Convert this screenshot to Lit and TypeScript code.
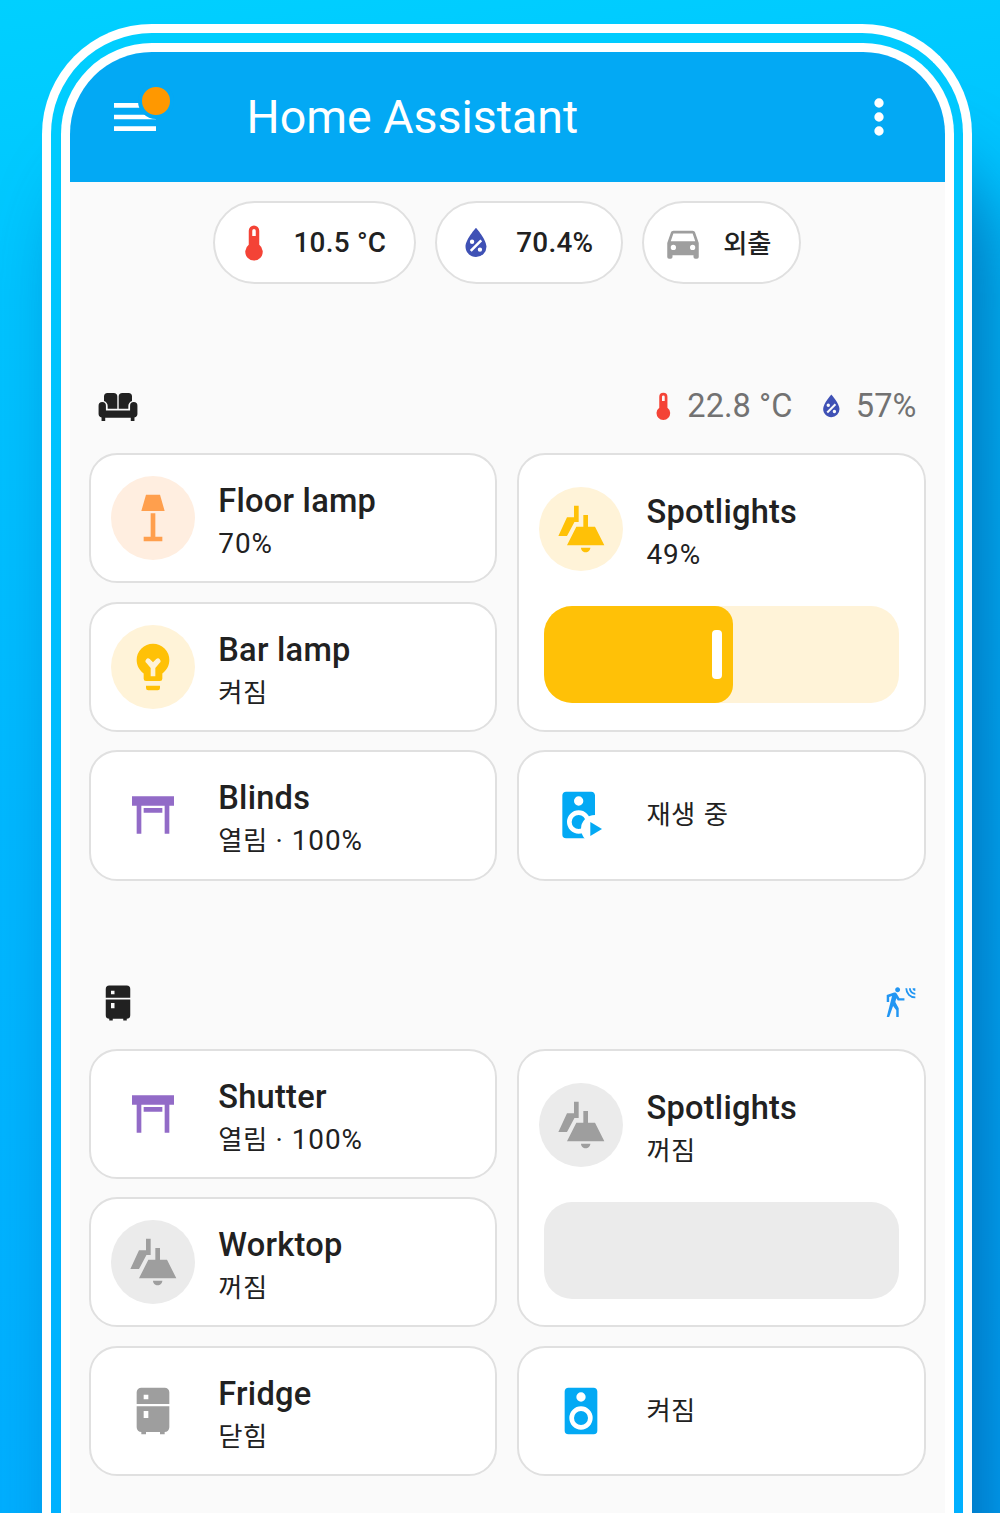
import { LitElement, html, svg, css, nothing } from "lit";
import { customElement, property } from "lit/decorators.js";
import { styleMap } from "lit/directives/style-map.js";

const ICONS: Record<string, string> = {
  thermometer:
    "M15 13V5A3 3 0 0 0 9 5V13A5 5 0 1 0 15 13M12 4A1 1 0 0 1 13 5V8H11V5A1 1 0 0 1 12 4Z",
  water:
    "M12,3.25C12,3.25 6,10 6,14C6,17.32 8.69,20 12,20A6,6 0 0,0 18,14C18,10 12,3.25 12,3.25M14.47,9.97L15.53,11.03L9.53,17.03L8.47,15.97M9.75,10A1.25,1.25 0 0,1 11,11.25A1.25,1.25 0 0,1 9.75,12.5A1.25,1.25 0 0,1 8.5,11.25A1.25,1.25 0 0,1 9.75,10M14.25,14.5A1.25,1.25 0 0,1 15.5,15.75A1.25,1.25 0 0,1 14.25,17A1.25,1.25 0 0,1 13,15.75A1.25,1.25 0 0,1 14.25,14.5Z",
  car: "M5,11L6.5,6.5H17.5L19,11M17.5,16A1.5,1.5 0 0,1 16,14.5A1.5,1.5 0 0,1 17.5,13A1.5,1.5 0 0,1 19,14.5A1.5,1.5 0 0,1 17.5,16M6.5,16A1.5,1.5 0 0,1 5,14.5A1.5,1.5 0 0,1 6.5,13A1.5,1.5 0 0,1 8,14.5A1.5,1.5 0 0,1 6.5,16M18.92,6C18.72,5.42 18.16,5 17.5,5H6.5C5.84,5 5.28,5.42 5.08,6L3,12V20A1,1 0 0,0 4,21H5A1,1 0 0,0 6,20V19H18V20A1,1 0 0,0 19,21H20A1,1 0 0,0 21,20V12L18.92,6Z",
  sofa: "M6 4H9.5Q11.6 4 11.6 6V13H6.1V11.4Q6 9.2 4 8.5V6Q4 4 6 4ZM18 4H14.5Q12.4 4 12.4 6V13H17.9V11.4Q18 9.2 20 8.5V6Q20 4 18 4ZM3 9.2A2.1 2.1 0 0 1 5.1 11.3V14H18.9V11.3A2.1 2.1 0 0 1 23.1 11.3V16A2.1 2.1 0 0 1 21.4 18V20H19.3V18.1H4.7V20H2.6V18A2.1 2.1 0 0 1 .9 16V11.3A2.1 2.1 0 0 1 3 9.2Z",
  floorLamp: "M9 2H15L17 9H7L9 2M11 10H13V20H16V22H8V20H11V10Z",
  bulb: "M12,2A7,7 0 0,0 5,9C5,11.38 6.19,13.47 8,14.74V17A1,1 0 0,0 9,18H15A1,1 0 0,0 16,17V14.74C17.81,13.47 19,11.38 19,9A7,7 0 0,0 12,2M9,20V21A1,1 0 0,0 10,22H14A1,1 0 0,0 15,21V20H9M11 16V12.4L9.2 10.3A.95 .95 0 0 1 10.6 8.6L12 10L13.4 8.6A.95 .95 0 0 1 14.8 10.3L13 12.4V16Z",
  shade: "M3 4H21V8H19V20H17V8H7V20H5V8H3V4M8 9H16V11H8V9Z",
  ceiling:
    "M9 2H11V9H9.2L6 15H2.3L6 7H9V2M13 6H15V11H18L22 19H6L10 11H13V6M12 20H16C16 21.1 15.1 22 14 22S12 21.1 12 20Z",
  speaker:
    "M12,12A3,3 0 1,0 12,18A3,3 0 1,0 12,12M12,20A5,5 0 1,1 12,10A5,5 0 1,1 12,20M12,4A2,2 0 1,1 12,8A2,2 0 1,1 12,4M17.4,2H6.6C5.7,2 5,2.7 5,3.6V20.4A1.6,1.6 0 0,0 6.6,22H17.4A1.6,1.6 0 0,0 19,20.4V3.6C19,2.7 18.3,2 17.4,2Z",
  fridge:
    "M7,2H17A2,2 0 0,1 19,4V9H5V4A2,2 0 0,1 7,2M19,19A2,2 0 0,1 17,21V22H15V21H9V22H7V21A2,2 0 0,1 5,19V10H19V19M8,5V7H10V5H8M8,12V15H10V12H8Z",
  motion:
    "M10,0.2C9,0.2 8.2,1 8.2,2C8.2,3 9,3.8 10,3.8C11,3.8 11.8,3 11.8,2C11.8,1 11,0.2 10,0.2M15.67,1A7.33,7.33 0 0,0 23,8.33V7A6,6 0 0,1 17,1H15.67M18.33,1C18.33,3.58 20.42,5.67 23,5.67V4.33C21.16,4.33 19.67,2.84 19.67,1H18.33M21,1A2,2 0 0,0 23,3V1H21M7.92,4.03C7.75,4.03 7.58,4.06 7.42,4.11L2,5.8V11H3.8V7.33L5.91,6.67L2,22H3.8L6.67,13.89L9,17V22H10.8V15.59L8.31,11.05L9.04,8.18L10.12,10H15V8.2H11.38L9.38,4.87C9.08,4.37 8.54,4.03 7.92,4.03Z",
  menu: "M3 6H21V8H3V6M3 11H21V13H3V11M3 16H21V18H3V16Z",
  dots: "M12 4A2 2 0 1 1 12 8A2 2 0 1 1 12 4M12 10A2 2 0 1 1 12 14A2 2 0 1 1 12 10M12 16A2 2 0 1 1 12 20A2 2 0 1 1 12 16Z",
};

/** Hangul runs are set slightly smaller than the Latin text around them. */
const mixed = (text: string) =>
  text
    .split(/([\uac00-\ud7a3]+)/)
    .filter(Boolean)
    .map((run) => (/[\uac00-\ud7a3]/.test(run) ? html`<span class="ko" lang="ko">${run}</span>` : run));

@customElement("ha-icon")
class HaIcon extends LitElement {
  @property() name = "";
  static styles = css`
    :host { display: block; flex: none; width: 56px; height: 56px; }
    .glyph { display: block; width: 100%; height: 100%; fill: currentColor; fill-rule: evenodd; }
    .gap { fill: #fff; }
  `;
  render() {
    const body =
      this.name === "speakerPlay"
        ? svg`<path transform="translate(-1 0)" d=${ICONS.speaker}></path>
            <circle class="gap" cx="18" cy="18" r="6"></circle>
            <path d="M16 15V21L21 18Z"></path>`
        : svg`<path d=${ICONS[this.name]}></path>`;
    return html`<svg class="glyph" viewBox="0 0 24 24">${body}</svg>`;
  }
}

interface Tile {
  icon: string;
  tone: string;
  name?: string;
  state: string;
  disc?: boolean;
  level?: number;
}

@customElement("tile-card")
class TileCard extends LitElement {
  @property({ attribute: false }) tile!: Tile;
  static styles = css`
    :host {
      display: flex; flex-direction: column; box-sizing: border-box;
      background: #fff; border: 2.3px solid #e0e0e0; border-radius: 28px;
      padding: 0 20.6px;
    }
    :host([tall]) { grid-row: span 2; padding-top: 26.5px; }
    .head { display: flex; align-items: center; gap: 23.2px; flex: 1; }
    :host([tall]) .head { flex: none; height: 95px; }
    .disc {
      flex: none; display: flex; align-items: center; justify-content: center;
      width: 84px; height: 84px; border-radius: 50%;
    }
    .filled { background: var(--soft); }
    .disc, .slider { color: var(--tone); }
    .amber { --tone: #ffc107; --soft: #fff3d8; }
    .orange { --tone: #ff9f4d; --soft: #ffeee0; }
    .purple { --tone: #926bc7; }
    .blue { --tone: #03a9f4; }
    .grey { --tone: #9e9e9e; --soft: #ebebeb; }
    .text { display: flex; flex-direction: column; color: #212121; white-space: nowrap; }
    .name { font-size: 32.6px; line-height: 43px; font-weight: 500; letter-spacing: 0.25px; margin-top: 9px; }
    .state { font-size: 27.9px; line-height: 42px; letter-spacing: 0.97px; }
    .ko { font-size: 0.945em; letter-spacing: 0.4px; }
    .slider {
      display: flex; margin: 29.5px 4.3px 0; height: 97.7px; border-radius: 28px;
      background: var(--soft); overflow: hidden;
    }
    .fill {
      display: flex; align-items: center; justify-content: flex-end; box-sizing: border-box;
      padding-right: 11.3px; background: var(--tone); border-radius: 0 18px 18px 0;
    }
    .grip { width: 10px; height: 49px; border-radius: 4px; background: #fff; }
  `;
  render() {
    const t = this.tile;
    return html`
      <div class="head ${t.tone}">
        <div class="disc ${t.disc ? "filled" : ""}"><ha-icon name=${t.icon}></ha-icon></div>
        <div class="text">
          ${t.name ? html`<div class="name">${t.name}</div>` : nothing}
          <div class="state">${mixed(t.state)}</div>
        </div>
      </div>
      ${t.level === undefined
        ? nothing
        : html`<div class="slider ${t.tone}">
            ${t.level > 0
              ? html`<div class="fill" style=${styleMap({ width: `${t.level}%` })}><div class="grip"></div></div>`
              : nothing}
          </div>`}
    `;
  }
}

const LIVING: Tile[] = [
  { icon: "floorLamp", tone: "orange", name: "Floor lamp", state: "70%", disc: true },
  { icon: "ceiling", tone: "amber", name: "Spotlights", state: "49%", disc: true, level: 53.4 },
  { icon: "bulb", tone: "amber", name: "Bar lamp", state: "켜짐", disc: true },
  { icon: "shade", tone: "purple", name: "Blinds", state: "열림 · 100%" },
  { icon: "speakerPlay", tone: "blue", state: "재생 중" },
];

const KITCHEN: Tile[] = [
  { icon: "shade", tone: "purple", name: "Shutter", state: "열림 · 100%" },
  { icon: "ceiling", tone: "grey", name: "Spotlights", state: "꺼짐", disc: true, level: 0 },
  { icon: "ceiling", tone: "grey", name: "Worktop", state: "꺼짐", disc: true },
  { icon: "fridge", tone: "grey", name: "Fridge", state: "닫힘" },
  { icon: "speaker", tone: "blue", state: "켜짐" },
];

@customElement("app-root")
class AppRoot extends LitElement {
  static styles = css`
    :host {
      display: block; box-sizing: border-box; width: 1000px; height: 1513px; overflow: hidden;
      padding: 24px 28px 0 42px;
      background: linear-gradient(172deg, #00d0ff 0, #00c4ff 18%, #00b8ff 50%, #00adff 100%);
      font-family: Roboto, "Noto Sans CJK KR", sans-serif;
    }
    .shell {
      box-sizing: border-box; height: 1700px; padding: 9.5px;
      border: 9.3px solid #fff; border-bottom: 0; border-radius: 110px 110px 0 0;
      background: linear-gradient(172deg, #00cfff 0, #00c4ff 18%, #00b8ff 50%, #00adff 100%);
      box-shadow: 28px 130px 72px -2px rgba(0, 80, 155, 0.64);
    }
    .screen {
      box-sizing: border-box; height: 1690px; overflow: hidden;
      border: 9.3px solid #fff; border-bottom: 0; border-radius: 91px 91px 0 0;
      background: #fafafa;
    }
    .bar {
      display: flex; align-items: center; box-sizing: border-box; height: 130.5px;
      padding: 0 38px 0 37px; background: #03a9f4; color: #fff;
    }
    .menu { position: relative; }
    .alert {
      position: absolute; top: -6px; left: 31px; width: 28px; height: 28px;
      border: 4px solid #03a9f4; border-radius: 50%; background: #ff9800;
    }
    .title { flex: 1; margin-left: 84px; font-size: 46.5px; line-height: 56px; }
    .badges { display: flex; justify-content: center; gap: 19px; padding-top: 19.2px; }
    .badge {
      display: flex; align-items: center; gap: 18.9px; box-sizing: border-box; height: 83.3px;
      padding: 0 28px 0 18px; border: 2.3px solid #e0e0e0; border-radius: 42px; background: #fff;
      color: #212121; font-size: 27.9px; font-weight: 500; letter-spacing: 0.25px; white-space: nowrap;
    }
    .ko { font-size: 0.94em; letter-spacing: 0; margin-top: -2px; display: inline-block; }
    .badge ha-icon, .room ha-icon { width: 42px; height: 42px; }
    .red { color: #f44336; }
    .indigo { color: #3f51b5; }
    .grey { color: #9e9e9e; }
    .sky { color: #2196f3; }
    .section { padding: 0 19px; margin-top: 98px; }
    .room {
      display: flex; align-items: center; justify-content: space-between; height: 50px;
      margin-bottom: 20.3px; padding: 0 9.2px 0 8.8px; color: #212121;
    }
    .section + .section { margin-top: 97.7px; }
    .readings { display: flex; align-items: center; gap: 23px; color: #727272; }
    .reading {
      display: flex; align-items: center; gap: 7.8px; font-size: 32.6px; line-height: 38px;
      margin-top: -3px; white-space: nowrap;
    }
    .room .readings ha-icon { width: 32.7px; height: 32.7px; }
    .grid {
      display: grid; grid-template-columns: 1fr 1fr; grid-auto-rows: 130.2px; gap: 18.6px 19.4px;
    }
  `;

  private tiles(list: Tile[]) {
    return html`<div class="grid">
      ${list.map((t) => html`<tile-card ?tall=${t.level !== undefined} .tile=${t}></tile-card>`)}
    </div>`;
  }

  render() {
    return html`
      <div class="shell">
        <div class="screen">
          <header class="bar">
            <div class="menu"><ha-icon name="menu"></ha-icon><span class="alert"></span></div>
            <div class="title">Home Assistant</div>
            <ha-icon name="dots"></ha-icon>
          </header>
          <div class="badges">
            <div class="badge"><ha-icon class="red" name="thermometer"></ha-icon><span>10.5 °C</span></div>
            <div class="badge"><ha-icon class="indigo" name="water"></ha-icon><span>70.4%</span></div>
            <div class="badge"><ha-icon class="grey" name="car"></ha-icon><span>${mixed("외출")}</span></div>
          </div>
          <section class="section">
            <div class="room">
              <ha-icon name="sofa"></ha-icon>
              <div class="readings">
                <div class="reading"><ha-icon class="red" name="thermometer"></ha-icon><span>22.8 °C</span></div>
                <div class="reading"><ha-icon class="indigo" name="water"></ha-icon><span>57%</span></div>
              </div>
            </div>
            ${this.tiles(LIVING)}
          </section>
          <section class="section">
            <div class="room">
              <ha-icon name="fridge"></ha-icon>
              <div class="readings"><ha-icon class="sky" name="motion"></ha-icon></div>
            </div>
            ${this.tiles(KITCHEN)}
          </section>
        </div>
      </div>
    `;
  }
}
